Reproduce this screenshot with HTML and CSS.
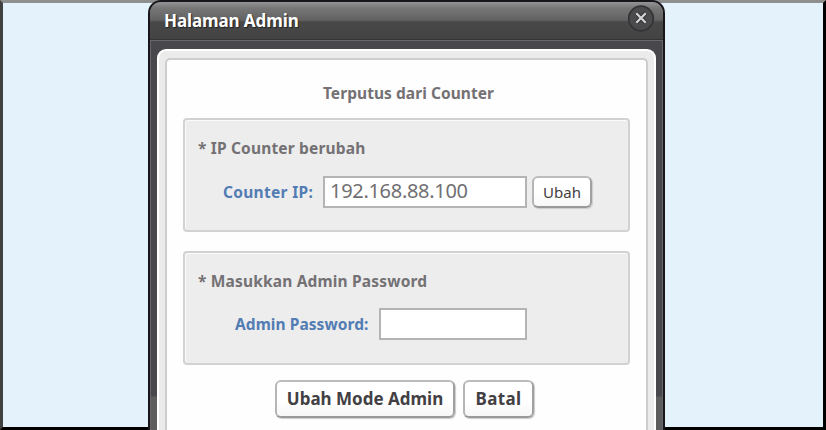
FILE: index.html
```
<!DOCTYPE html>
<html lang="id">
<head>
<meta charset="utf-8">
<title>Halaman Admin</title>
<link rel="stylesheet" href="styles.css">
</head>
<body>
<div class="screen">
  <main class="dialog">
    <header class="titlebar">
      <h1 class="title">Halaman Admin</h1>
      <button class="close" aria-label="Tutup"><svg width="28" height="28" viewBox="0 0 28 28"><circle cx="14" cy="13.5" r="12.3" fill="#4b4b4d" stroke="#343436" stroke-width="1.7"/><path d="M9.3 8.2 18.7 17.8M18.7 8.2 9.3 17.8" stroke="#2e2e30" stroke-width="4"/><path d="M9.3 8.2 18.7 17.8M18.7 8.2 9.3 17.8" stroke="#d4d4d4" stroke-width="2.3"/></svg></button>
    </header>
    <section class="frame">
      <div class="content">
        <p class="status">Terputus dari Counter</p>
        <div class="panel">
          <h2 class="heading">* IP Counter berubah</h2>
          <div class="row row-ip">
            <label class="label label-ip" for="ip">Counter IP:</label>
            <input class="input input-ip" id="ip" value="192.168.88.100">
            <button class="btn btn-small">Ubah</button>
          </div>
        </div>
        <div class="panel">
          <h2 class="heading">* Masukkan Admin Password</h2>
          <div class="row row-pass">
            <label class="label label-pass" for="pw">Admin Password:</label>
            <input class="input input-pass" id="pw" type="password">
          </div>
        </div>
        <div class="actions">
          <button class="btn btn-mode">Ubah Mode Admin</button>
          <button class="btn btn-cancel">Batal</button>
        </div>
      </div>
    </section>
  </main>
</div>
</body>
</html>
```
FILE: styles.css
```
* { box-sizing: border-box; }
body { margin: 0; font-family: "Noto Sans", "DejaVu Sans", sans-serif; }
h1, h2, p { margin: 0; }
button, input { font-family: inherit; margin: 0; }
.screen {
  width: 826px; height: 430px;
  border: 3px solid; border-color: #8d908e #000 #000 #414141;
  background: #e4f2fc;
}
.dialog {
  width: 517px; height: 430px; margin: -3px 0 0 145px;
  border: 2px solid #18151b; border-bottom: 0; border-radius: 13px 13px 0 0;
  background: linear-gradient(#48474c 0, #48474c 394px, #5d5d5d 395px);
  box-shadow: inset 1px 0 #68666a, inset -1px 0 #68666a;
}
.titlebar {
  height: 38px; display: flex; align-items: center; justify-content: space-between;
  padding: 0 8px 3px 14px;
  border-bottom: 1px solid #343436; border-radius: 11px 11px 0 0;
  background: linear-gradient(#949494 0, #777 6px, #626262 18px, #484848 20px, #434343 100%);
  box-shadow: 0 1px #6a686c;
}
.title { font-size: 17px; line-height: 24px; color: #fff; letter-spacing: -.1px; text-shadow: 1px 1px 1px #222; padding-top: 3px; white-space: nowrap; }
.close { width: 28px; height: 28px; padding: 0; border: 0; background: none; }
.close svg { display: block; }
.frame {
  margin: 9px 7px 0; height: 381px; padding: 7px 6px 0 6px;
  border: 2px solid #fff; border-bottom: 0; border-radius: 9px 9px 0 0; background: #ebebeb;
}
.content {
  height: 372px; border: 2px solid #cdcdcd; border-bottom: 0; border-radius: 5px 5px 0 0;
  background: #fefefe; padding: 0 16px;
  display: flex; flex-direction: column; gap: 19px;
}
.status { height: 39px; padding: 23px 0 0 4px; text-align: center; }
.status, .heading, .label { font-size: 15.5px; line-height: 20px; font-weight: 700; color: #747174; white-space: nowrap; letter-spacing: .06px; }
.heading { letter-spacing: .17px; }
.panel {
  height: 114px; flex: none; padding: 18px 12px 0 13px;
  border: 2px solid #d2d2d2; border-radius: 4px; background: #ededed;
  box-shadow: inset 1px 1px #fafafa;
}
.row { display: flex; align-items: center; height: 32px; }
.row-ip { margin: 18px 0 0 25px; }
.row-pass { margin: 17px 0 0 37px; }
.label { color: #527cb3; flex: none; }
.label-ip { width: 100px; letter-spacing: .3px; }
.label-pass { width: 144px; }
.input { height: 32px; border: 2px solid #b4b4b4; border-radius: 0; background: #fff; color: #716f72; outline: 0; }
.input-ip { width: 204px; padding: 0 5px 3px; font-size: 20px; letter-spacing: -.3px; }
.input-pass { width: 148px; }
.btn {
  border: 2px solid; border-color: #bcbcbc #a0a0a0 #999 #b5b5b5; border-radius: 6px;
  background: linear-gradient(#fff 55%, #f7f7f7); color: #424043; padding: 0; white-space: nowrap;
  font-weight: 700; box-shadow: 1px 1px 1px #ccc;
}
.btn-small { width: 60px; height: 32px; margin-left: 5px; font-size: 15px; font-weight: 400; }
.actions { display: flex; gap: 8px; margin: -4px 0 0 92px; }
.actions .btn { height: 38px; font-size: 17px; padding-bottom: 2px; }
.btn-mode { width: 180px; }
.actions .btn-cancel { width: 71px; letter-spacing: .4px; }
```
